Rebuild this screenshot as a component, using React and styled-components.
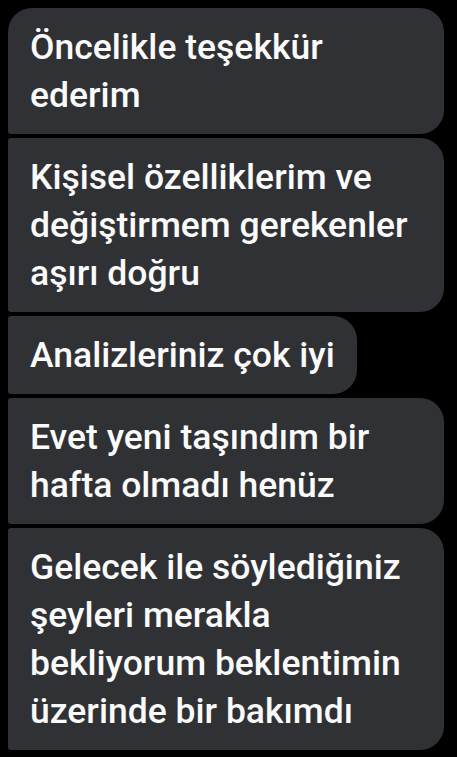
import React from "react";
import styled, { createGlobalStyle } from "styled-components";

const Global = createGlobalStyle`
  html, body {
    margin: 0;
    padding: 0;
    background: #000;
  }
  body {
    font-family: Roboto, "Noto Sans", "Liberation Sans", sans-serif;
    -webkit-font-smoothing: antialiased;
  }
`;

const Thread = styled.div`
  display: flex;
  flex-direction: column;
  align-items: flex-start;
  gap: 4px;
  padding: 8px 13px 8px 8px;
  min-height: 757px;
  box-sizing: border-box;
  background: #000;
`;

const Bubble = styled.div`
  box-sizing: border-box;
  max-width: 436px;
  padding: 15px 22px;
  background: #2f3135;
  color: #fafafa;
  font-size: 35.5px;
  font-weight: 500;
  line-height: 48px;
  border-radius: ${({ $first }) => `${$first ? 24 : 3}px 24px 24px 3px`};
`;

const messages = [
  "Öncelikle teşekkür ederim",
  "Kişisel özelliklerim ve değiştirmem gerekenler aşırı doğru",
  "Analizleriniz çok iyi",
  "Evet yeni taşındım bir hafta olmadı henüz",
  "Gelecek ile söylediğiniz şeyleri merakla bekliyorum beklentimin üzerinde bir bakımdı",
];

export default function App() {
  return (
    <>
      <Global />
      <Thread>
        {messages.map((m, i) => (
          <Bubble key={i} $first={i === 0}>
            {m}
          </Bubble>
        ))}
      </Thread>
    </>
  );
}
